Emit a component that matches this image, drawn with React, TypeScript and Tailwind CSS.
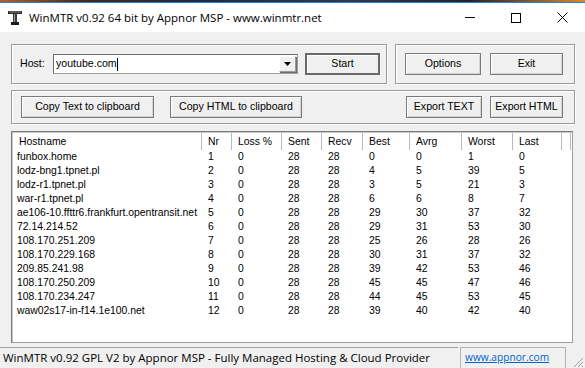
import React from 'react';

const rows = [
  ['funbox.home', 1, 0, 28, 28, 0, 0, 1, 0],
  ['lodz-bng1.tpnet.pl', 2, 0, 28, 28, 4, 5, 39, 5],
  ['lodz-r1.tpnet.pl', 3, 0, 28, 28, 3, 5, 21, 3],
  ['war-r1.tpnet.pl', 4, 0, 28, 28, 6, 6, 8, 7],
  ['ae106-10.ffttr6.frankfurt.opentransit.net', 5, 0, 28, 28, 29, 30, 37, 32],
  ['72.14.214.52', 6, 0, 28, 28, 29, 31, 53, 30],
  ['108.170.251.209', 7, 0, 28, 28, 25, 26, 28, 26],
  ['108.170.229.168', 8, 0, 28, 28, 30, 31, 37, 32],
  ['209.85.241.98', 9, 0, 28, 28, 39, 42, 53, 46],
  ['108.170.250.209', 10, 0, 28, 28, 45, 45, 47, 46],
  ['108.170.234.247', 11, 0, 28, 28, 44, 45, 53, 45],
  ['waw02s17-in-f14.1e100.net', 12, 0, 28, 28, 39, 40, 42, 40],
];

const cols = [
  { name: 'Hostname', w: 'w-[189px]' },
  { name: 'Nr', w: 'w-[30px]' },
  { name: 'Loss %', w: 'w-[50px]' },
  { name: 'Sent', w: 'w-[40px]' },
  { name: 'Recv', w: 'w-[41px]' },
  { name: 'Best', w: 'w-[47px]' },
  { name: 'Avrg', w: 'w-[52px]' },
  { name: 'Worst', w: 'w-[51px]' },
  { name: 'Last', w: 'w-[49px]' },
];

const ui = { fontFamily: '"Liberation Sans", Arial, sans-serif' };
const segoe = { fontFamily: '"Open Sans", "Noto Sans", sans-serif' };

function Btn({ label, w, primary }: { label: string; w: string; primary?: boolean }) {
  return (
    <button
      className={`${w} h-[22px] bg-[#f0f0f0] text-[10.6px] text-black flex items-center justify-center ${
        primary
          ? 'border-2 border-[#6a6a6a] shadow-[inset_1px_1px_0_#fff]'
          : 'border border-[#7a7a7a] shadow-[inset_1px_1px_0_#fff,inset_-1px_-1px_0_#d4d4d4]'
      }`}
    >
      {label}
    </button>
  );
}

function Group({ className, children }: { className: string; children: React.ReactNode }) {
  return (
    <div className={`border border-[#9a9a9a] shadow-[inset_1px_1px_0_#fff,1px_1px_0_#fff] flex items-center ${className}`}>
      {children}
    </div>
  );
}

export default function App() {
  return (
    <div className="w-[585px] h-[368px] overflow-hidden bg-[#f0f0f0] flex flex-col" style={ui}>
      {/* desktop strip behind window */}
      <div className="h-[2px] bg-[linear-gradient(90deg,#b2602c_0%,#3a2a22_15%,#1b2c4a_35%,#2a3a55_60%,#1f2430_80%,#d98a2b_100%)]" />
      <div className="h-[1px] bg-[#2f7fd0]" />

      {/* title bar */}
      <div className="h-[29px] bg-white flex items-center">
        <svg width="16" height="16" viewBox="0 0 16 16" className="ml-[7px]">
          <rect x="1" y="1" width="14" height="3" fill="#2a2a2a" />
          <rect x="2" y="1.5" width="12" height="1" fill="#8a8a8a" />
          <rect x="6" y="4" width="4" height="9" fill="#3a3a3a" />
          <rect x="7" y="4" width="1" height="9" fill="#9a9a9a" />
          <rect x="4" y="12" width="8" height="3" fill="#1a1a1a" />
        </svg>
        <span className="ml-[6px] text-[11.5px] text-black" style={segoe}>
          WinMTR v0.92 64 bit by Appnor MSP - www.winmtr.net
        </span>
        <div className="ml-auto flex items-center h-full">
          <div className="w-[46px] h-full flex items-center justify-center">
            <div className="w-[10px] h-[1px] bg-black" />
          </div>
          <div className="w-[46px] h-full flex items-center justify-center">
            <div className="w-[10px] h-[10px] border border-black" />
          </div>
          <div className="w-[46px] h-full flex items-center justify-center">
            <svg width="11" height="11" viewBox="0 0 11 11">
              <path d="M0.5 0.5 L10.5 10.5 M10.5 0.5 L0.5 10.5" stroke="#000" strokeWidth="1" />
            </svg>
          </div>
        </div>
      </div>

      {/* control groups */}
      <div className="pl-[11px] pr-[10px] pt-[12px] flex flex-col">
        <div className="flex gap-[8px]">
          <Group className="w-[376px] h-[40px] pl-[8px]">
            <span className="text-[10.6px] text-black w-[33px]">Host:</span>
            <div className="w-[245px] h-[20px] bg-white border border-[#a0a0a0] border-t-[#6d6d6d] border-l-[#6d6d6d] flex items-center relative">
              <span className="text-[10.6px] text-black pl-[2px]">youtube.com</span>
              <span className="w-[1px] h-[13px] bg-black" />
              <div className="absolute right-[1px] top-[1px] w-[17px] h-[16px] bg-[#f0f0f0] border border-[#9a9a9a] border-t-white border-l-white shadow-[1px_1px_0_#6d6d6d] flex items-center justify-center">
                <svg width="7" height="4" viewBox="0 0 7 4">
                  <path d="M0 0 H7 L3.5 4 Z" fill="#000" />
                </svg>
              </div>
            </div>
            <div className="ml-[7px]">
              <Btn label="Start" w="w-[75px]" primary />
            </div>
          </Group>
          <Group className="w-[180px] h-[40px] pl-[9px] gap-[9px]">
            <Btn label="Options" w="w-[76px]" />
            <Btn label="Exit" w="w-[73px]" />
          </Group>
        </div>

        <Group className="mt-[6px] h-[34px] pl-[9px] pr-[11px] justify-between">
          <div className="flex gap-[16px]">
            <Btn label="Copy Text to clipboard" w="w-[133px]" />
            <Btn label="Copy HTML to clipboard" w="w-[132px]" />
          </div>
          <div className="flex gap-[8px]">
            <Btn label="Export TEXT" w="w-[76px]" />
            <Btn label="Export HTML" w="w-[73px]" />
          </div>
        </Group>

        {/* list view */}
        <div className="mt-[7px] w-[562px] h-[212px] bg-white border border-[#a0a0a0] border-t-[#7a7a7a] border-l-[#7a7a7a] shadow-[inset_1px_1px_0_#c8c8c8]">
          <div className="pl-[1px] pt-[1px]">
            <div className="flex h-[17px] items-center">
              {cols.map((c) => (
                <div
                  key={c.name}
                  className={`${c.w} h-full shrink-0 flex items-center pl-[6px] border-r border-[#b9b9b9] text-[10.4px] text-black`}
                >
                  {c.name}
                </div>
              ))}
              <div className="w-[9px] h-full border-r border-[#b9b9b9]" />
            </div>
            {rows.map((r) => (
              <div key={r[1]} className="flex h-[14px] items-center text-[10.4px] text-black leading-none">
                {r.map((v, i) => (
                  <div
                    key={i}
                    className={`${cols[i].w} shrink-0 ${i === 0 ? 'pl-[4px]' : 'pl-[6px]'} whitespace-nowrap overflow-hidden`}
                  >
                    {v}
                  </div>
                ))}
              </div>
            ))}
          </div>
        </div>
      </div>

      {/* status bar */}
      <div className="mt-auto h-[21px] flex items-stretch relative" style={segoe}>
        <div className="w-[458px] border-t border-[#a0a0a0] flex items-center pl-[3px] text-[11.5px] text-black whitespace-nowrap overflow-hidden">
          WinMTR v0.92 GPL V2 by Appnor MSP - Fully Managed Hosting &amp; Cloud Provider
        </div>
        <div className="ml-[2px] w-[106px] border-t border-l border-r border-[#b4b4b4] flex items-center pl-[4px] text-[10.2px] text-[#0066cc] underline">
          www.appnor.com
        </div>
        <svg width="12" height="12" viewBox="0 0 12 12" className="absolute right-[1px] bottom-0">
          <path d="M11 2 L2 11 M11 6 L6 11 M11 10 L10 11" stroke="#a0a0a0" strokeWidth="1" />
        </svg>
      </div>
    </div>
  );
}
